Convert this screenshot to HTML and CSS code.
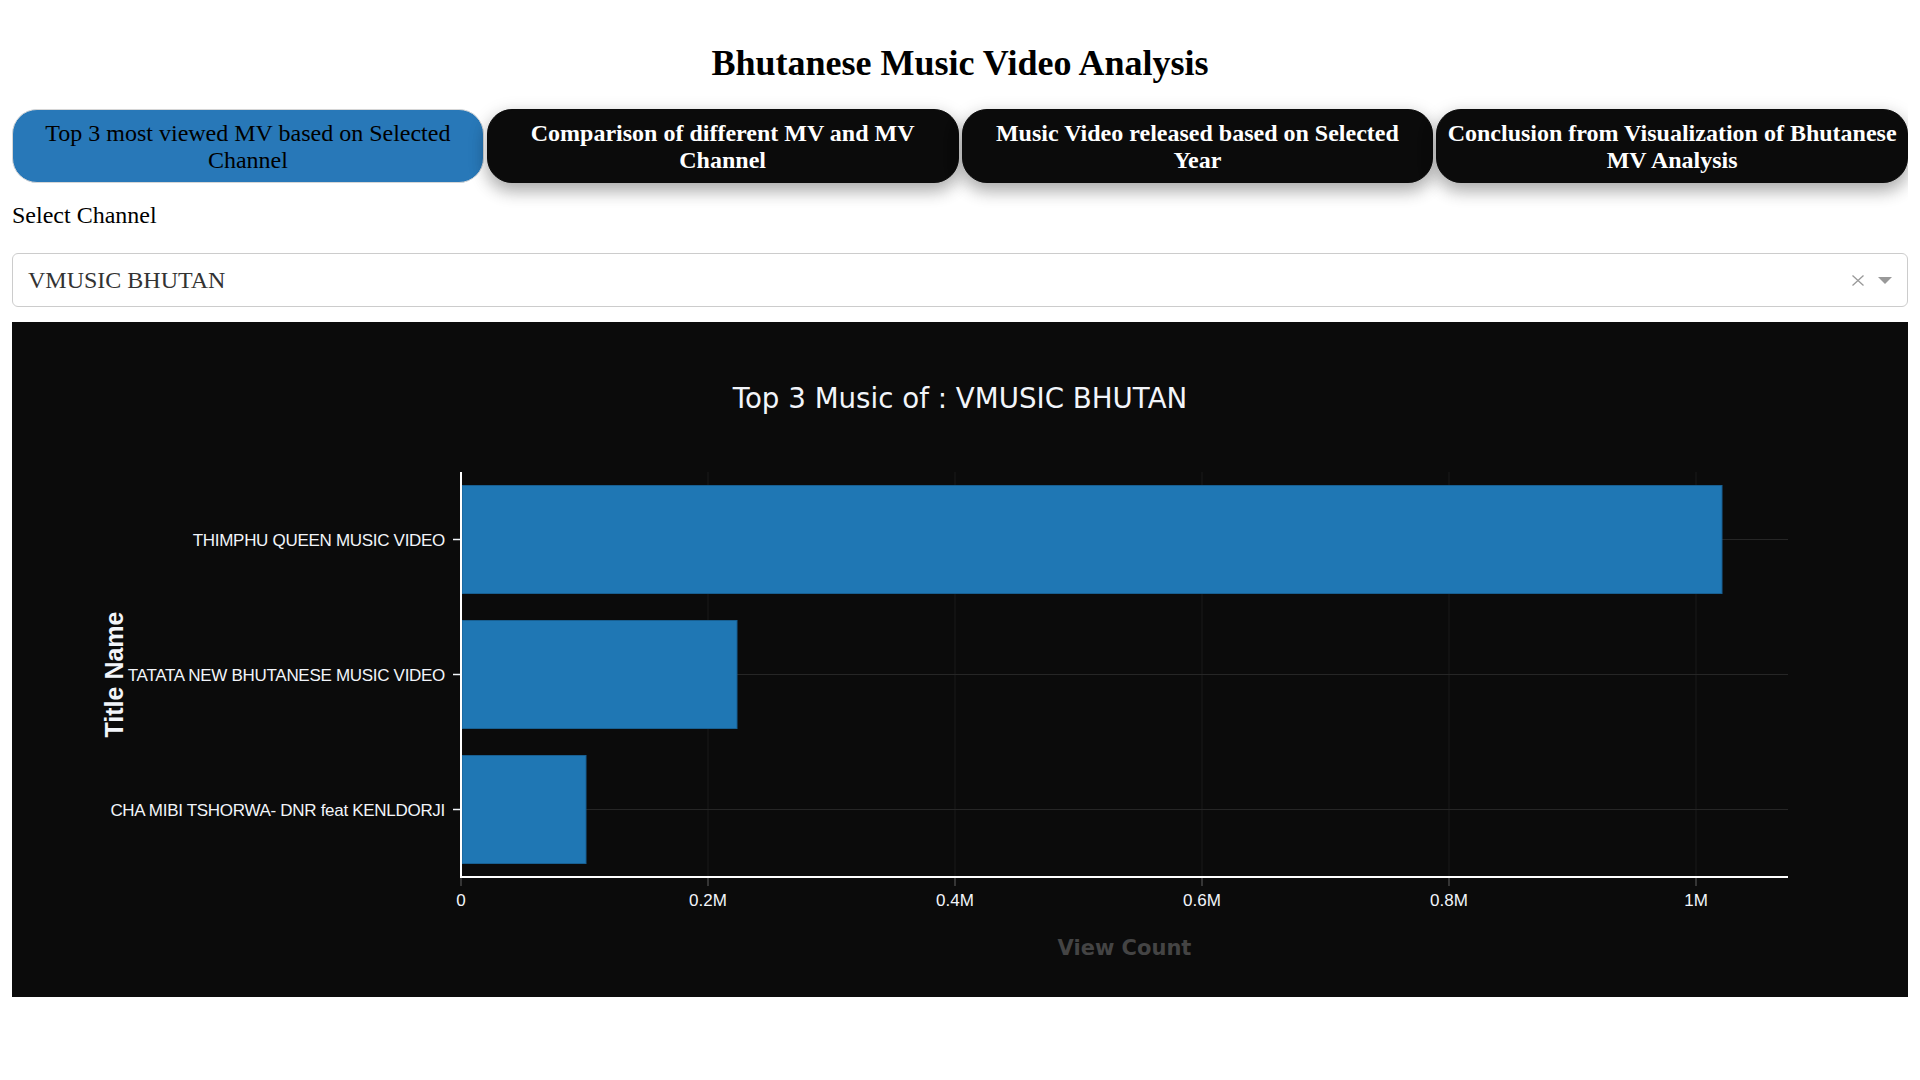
FILE: index.html
```html
<!DOCTYPE html>
<html lang="en">
<head>
<meta charset="utf-8">
<title>Bhutanese Music Video Analysis</title>
<link rel="stylesheet" href="styles.css">
</head>
<body>
  <h1 class="title">Bhutanese Music Video Analysis</h1>

  <div class="tabs">
    <div class="tab tab-active">Top 3 most viewed MV based on Selected Channel</div>
    <div class="tab">Comparison of different MV and MV Channel</div>
    <div class="tab">Music Video released based on Selected Year</div>
    <div class="tab">Conclusion from Visualization of Bhutanese MV Analysis</div>
  </div>

  <div class="label">Select Channel</div>

  <div class="select">
    <span class="select-value">VMUSIC BHUTAN</span>
    <span class="select-clear" aria-label="Clear">
      <svg width="12" height="11" viewBox="0 0 12 11"><path d="M0.5 0.5 L11.5 10.5 M11.5 0.5 L0.5 10.5" stroke="#999" stroke-width="1.3" fill="none"/></svg>
    </span>
    <span class="select-arrow"></span>
  </div>

  <div class="chart">
    <svg class="plot" width="1896" height="675" viewBox="0 0 1896 675">
      <g class="grid-v">
        <line x1="696" y1="150" x2="696" y2="555"/>
        <line x1="943" y1="150" x2="943" y2="555"/>
        <line x1="1190" y1="150" x2="1190" y2="555"/>
        <line x1="1437" y1="150" x2="1437" y2="555"/>
        <line x1="1684" y1="150" x2="1684" y2="555"/>
      </g>
      <g class="grid-h">
        <line x1="449" y1="217.5" x2="1776" y2="217.5"/>
        <line x1="449" y1="352.5" x2="1776" y2="352.5"/>
        <line x1="449" y1="487.5" x2="1776" y2="487.5"/>
      </g>
      <g class="bars">
        <rect x="450" y="163.5" width="1260" height="108"/>
        <rect x="450" y="298.5" width="275" height="108"/>
        <rect x="450" y="433.5" width="124" height="108"/>
      </g>
      <g class="ticks-x">
        <line x1="449" y1="556" x2="449" y2="564"/>
        <line x1="696" y1="556" x2="696" y2="564"/>
        <line x1="943" y1="556" x2="943" y2="564"/>
        <line x1="1190" y1="556" x2="1190" y2="564"/>
        <line x1="1437" y1="556" x2="1437" y2="564"/>
        <line x1="1684" y1="556" x2="1684" y2="564"/>
      </g>
      <g class="ticks-y">
        <line x1="441" y1="217.5" x2="448" y2="217.5"/>
        <line x1="441" y1="352.5" x2="448" y2="352.5"/>
        <line x1="441" y1="487.5" x2="448" y2="487.5"/>
      </g>
      <g class="axis-lines">
        <line x1="449" y1="150" x2="449" y2="556"/>
        <line x1="448" y1="555" x2="1776" y2="555"/>
      </g>
      <text class="chart-title" x="948" y="86">Top 3 Music of : VMUSIC BHUTAN</text>
      <g class="xlabels">
        <text x="449" y="584">0</text>
        <text x="696" y="584">0.2M</text>
        <text x="943" y="584">0.4M</text>
        <text x="1190" y="584">0.6M</text>
        <text x="1437" y="584">0.8M</text>
        <text x="1684" y="584">1M</text>
      </g>
      <g class="ylabels">
        <text x="433" y="223.5">THIMPHU QUEEN MUSIC VIDEO</text>
        <text x="433" y="358.5">TATATA NEW BHUTANESE MUSIC VIDEO</text>
        <text x="433" y="493.5">CHA MIBI TSHORWA- DNR feat KENLDORJI</text>
      </g>
      <text class="ytitle" x="111" y="352.5" transform="rotate(-90 111 352.5)">Title Name</text>
      <text class="xtitle" x="1112.5" y="633">View Count</text>
    </svg>
  </div>
</body>
</html>
```

FILE: styles.css
```css
html, body {
  background: #ffffff;
}

body {
  margin: 12px;
  font-family: "Liberation Serif", "Times New Roman", serif;
  color: #000;
}

.title {
  margin: 31px 0 26px;
  font-size: 36px;
  line-height: 40px;
  font-weight: bold;
  text-align: center;
}

.tabs {
  display: grid;
  grid-template-columns: repeat(4, 1fr);
  column-gap: 3px;
}

.tab {
  box-sizing: border-box;
  height: 74px;
  padding: 10px 10px;
  border: 1px solid #0b0b0b;
  border-radius: 25px;
  background: #0b0b0b;
  color: #ffffff;
  font-size: 24px;
  line-height: 27px;
  font-weight: bold;
  text-align: center;
  box-shadow: 0 8px 16px 0 rgba(0, 0, 0, 0.2), 0 6px 20px 0 rgba(0, 0, 0, 0.19);
}

.tab-active {
  background: #2878b8;
  border-color: #d6d6d6;
  color: #000;
  font-weight: normal;
  box-shadow: none;
}

.label {
  margin-top: 18px;
  font-size: 24px;
  line-height: 28px;
}

.select {
  box-sizing: border-box;
  margin-top: 24px;
  height: 54px;
  border: 1px solid #cccccc;
  border-radius: 6px;
  display: flex;
  align-items: center;
  padding: 0 15.5px 0 15px;
  background: #fff;
}

.select-value {
  flex: 1;
  font-size: 24px;
  color: #333;
}

.select-clear {
  display: flex;
  align-items: center;
  margin-right: 14px;
}

.select-clear svg {
  display: block;
}

.select-arrow {
  width: 0;
  height: 0;
  border-style: solid;
  border-width: 7px 7.5px 0;
  border-color: #999 transparent transparent;
  margin-top: 1px;
}

.chart {
  margin-top: 15px;
  height: 675px;
  background: #0b0b0b;
  overflow: hidden;
}

.plot {
  display: block;
}

.grid-v line {
  stroke: #1a1a1a;
  stroke-width: 1;
}

.grid-h line {
  stroke: #262626;
  stroke-width: 1;
}

.bars rect {
  fill: #1f77b4;
  stroke: #185f91;
  stroke-width: 1;
}

.ticks-x line {
  stroke: #444;
  stroke-width: 1.5;
}

.ticks-y line {
  stroke: #f2f5fa;
  stroke-width: 1.5;
}

.axis-lines line {
  stroke: #ffffff;
  stroke-width: 2;
}

.chart-title {
  font-family: "DejaVu Sans", Verdana, sans-serif;
  font-size: 27.7px;
  fill: #f2f5fa;
  text-anchor: middle;
}

.xlabels text {
  font-family: "Liberation Sans", Arial, sans-serif;
  font-size: 17px;
  fill: #f2f5fa;
  text-anchor: middle;
}

.ylabels text {
  font-family: "Liberation Sans", Arial, sans-serif;
  font-size: 17px;
  letter-spacing: -0.3px;
  fill: #f2f5fa;
  text-anchor: end;
}

.ytitle {
  font-family: "Liberation Sans", Arial, sans-serif;
  font-size: 25px;
  font-weight: bold;
  fill: #f2f5fa;
  text-anchor: middle;
}

.xtitle {
  font-family: "DejaVu Sans", Verdana, sans-serif;
  font-size: 21px;
  font-weight: bold;
  fill: #444444;
  text-anchor: middle;
}
```
